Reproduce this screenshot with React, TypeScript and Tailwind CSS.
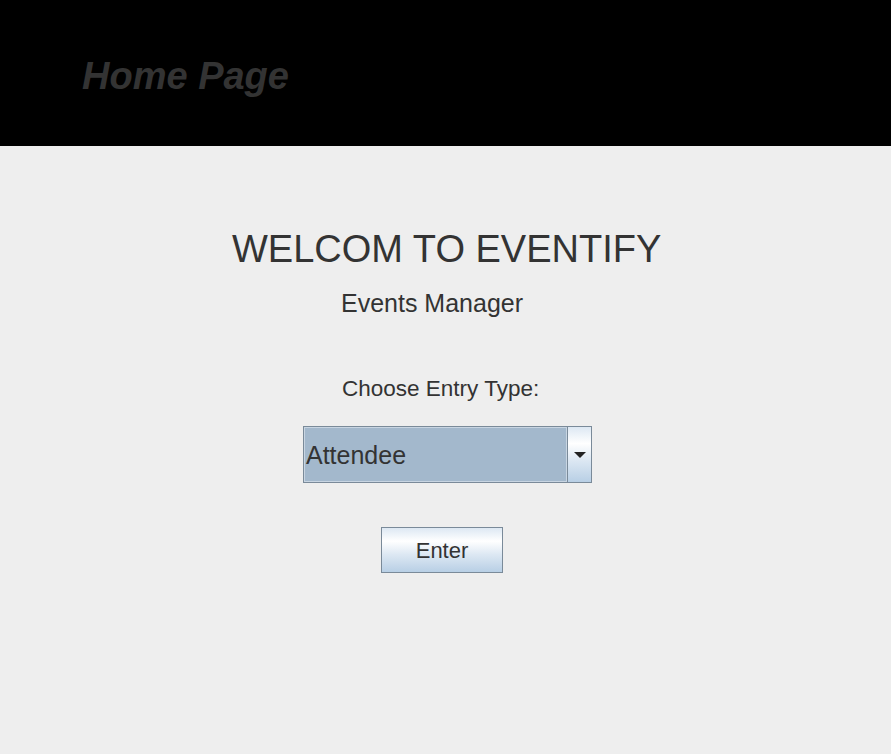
import { useState } from 'react';

const font = { fontFamily: '"Liberation Sans", Arial, sans-serif' };

export default function App() {
  const [entry] = useState('Attendee');

  return (
    <div className="w-[891px] h-[754px] flex flex-col bg-[#eeeeee] text-[#333333]" style={font}>
      {/* Header */}
      <header className="h-[146px] bg-black pl-[82px] pt-[57px]">
        <h1 className="text-[38px] leading-[38px] font-bold italic text-[#333333]">Home Page</h1>
      </header>

      {/* Main */}
      <main className="flex-1 flex flex-col items-start pt-[84px]">
        <h2 className="ml-[232px] text-[38px] leading-[38px]">WELCOM TO EVENTIFY</h2>
        <p className="ml-[341px] mt-[23px] text-[25px] leading-[25px]">Events Manager</p>
        <p className="ml-[342px] mt-[62px] text-[22.5px] leading-[22px]">Choose Entry Type:</p>

        {/* Combo box */}
        <div className="ml-[303px] mt-[26px] w-[289px] h-[57px] border border-[#7a8a99] flex">
          <div className="w-[263px] border border-[#c8d5e2] bg-[#a3b8cc] pl-[1px] pt-[15px]">
            <span className="text-[25px] leading-[25px]">{entry}</span>
          </div>
          <div className="w-[24px] border-l border-[#7a8a99] bg-[linear-gradient(to_bottom,#dde8f3_0%,#ffffff_30%,#dde8f3_60%,#b8cfe5_100%)] flex items-center justify-center">
            <svg width="12" height="6" viewBox="0 0 12 6">
              <path d="M0 0H12L6 6Z" fill="#222222" />
            </svg>
          </div>
        </div>

        {/* Enter button */}
        <button className="ml-[381px] mt-[44px] w-[122px] h-[46px] pt-[2px] border border-[#7a8a99] bg-[linear-gradient(to_bottom,#dde8f3_0%,#ffffff_30%,#dde8f3_60%,#b8cfe5_100%)] text-[22px] leading-[22px] text-[#333333] flex items-center justify-center">
          Enter
        </button>
      </main>
    </div>
  );
}
